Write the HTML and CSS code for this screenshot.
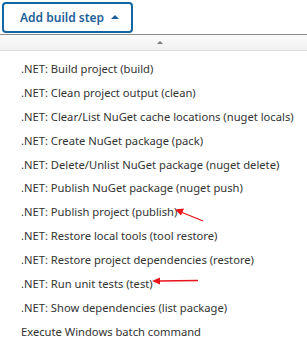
FILE: index.html
```html
<!DOCTYPE html>
<html>
  <head>
    <title>Add build step</title>
    <link rel="stylesheet" href="styles.css">
  </head>
  <body>
    <div class="page">
      <button class="add-step" type="button">
        Add build step <span class="caret"></span>
      </button>

      <!-- menu de passos -->
      <div class="menu">
        <div class="scroll-up"><span class="scroll-arrow"></span></div>
        <ul class="items">
          <li>.NET: Build project (build)</li>
          <li>.NET: Clean project output (clean)</li>
          <li>.NET: Clear/List NuGet cache locations (nuget locals)</li>
          <li>.NET: Create NuGet package (pack)</li>
          <li>.NET: Delete/Unlist NuGet package (nuget delete)</li>
          <li>.NET: Publish NuGet package (nuget push)</li>
          <li>.NET: Publish project (publish)</li>
          <li>.NET: Restore local tools (tool restore)</li>
          <li>.NET: Restore project dependencies (restore)</li>
          <li>.NET: Run unit tests (test)</li>
          <li>.NET: Show dependencies (list package)</li>
          <li>Execute Windows batch command</li>
        </ul>
      </div>

      <!-- setas vermelhas -->
      <svg class="marks" width="307" height="346" viewBox="0 0 307 346">
        <line x1="203" y1="221" x2="181" y2="212" stroke="#e8131b" stroke-width="1.3"/>
        <polygon points="175,209.5 184,208.5 181,215.5" fill="#e8131b"/>
        <line x1="198" y1="280.5" x2="158" y2="281" stroke="#e8131b" stroke-width="1.3"/>
        <polygon points="152,281 160,277.5 160,284.5" fill="#e8131b"/>
      </svg>
    </div>
  </body>
</html>
```

FILE: styles.css
```css
html {
  margin: 0;
  padding: 0;
}
body {
  font-family: "Noto Sans", "Open Sans", sans-serif;
  margin: 0;
  padding: 0;
  background-color: #fff;
  color: #333;
}

.page {
  position: relative;
  width: 307px;
  height: 346px;
  overflow: hidden;
  padding-top: 2px;
  box-sizing: border-box;
}

.add-step {
  display: flex;
  align-items: center;
  gap: 7px;
  margin-left: 2px;
  width: 131px;
  height: 31px;
  padding: 0 0 0 16px;
  box-sizing: border-box;
  border: 2px solid #1466a3;
  border-radius: 4px;
  background-color: #fff;
  color: #1c5f99;
  font-family: "Noto Sans", sans-serif;
  font-size: 12px;
  font-weight: 600;
  cursor: pointer;
}

.caret {
  width: 0;
  height: 0;
  border-left: 4px solid transparent;
  border-right: 4px solid transparent;
  border-bottom: 4px solid #1c5f99;
  margin-top: -1px;
}

.menu {
  margin-top: 1px;
  border-top: 1px solid #8a8a8a;
}

.scroll-up {
  display: flex;
  justify-content: center;
  align-items: center;
  height: 15px;
  padding-left: 12px;
  background: linear-gradient(#fbfbfb, #f1f1f1);
  border-bottom: 1px solid #dcdcdc;
}

.scroll-arrow {
  width: 0;
  height: 0;
  border-left: 3px solid transparent;
  border-right: 3px solid transparent;
  border-bottom: 3px solid #777;
}

.items {
  list-style: none;
  margin: 0;
  padding: 6px 0 0 21px;
}

.items li {
  height: 23.9px;
  line-height: 24px;
  font-size: 11.2px;
  color: #333;
  white-space: nowrap;
}

.marks {
  position: absolute;
  left: 0;
  top: 0;
  pointer-events: none;
}
```
